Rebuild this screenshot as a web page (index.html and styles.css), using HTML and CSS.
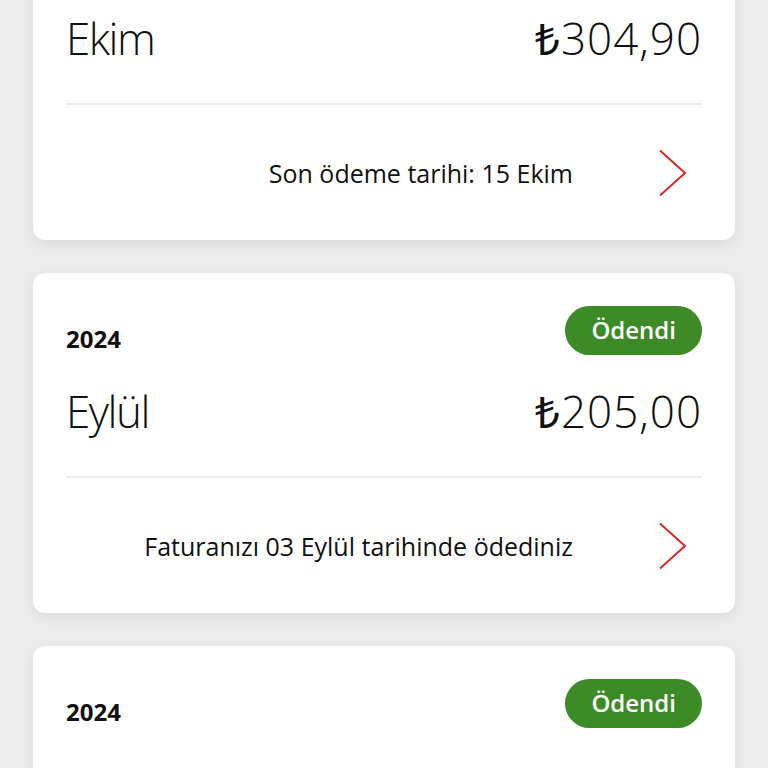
FILE: index.html
```html
<!DOCTYPE html>
<html lang="tr">
<head>
  <meta charset="UTF-8">
  <meta name="viewport" content="width=device-width, initial-scale=1">
  <title>Faturalarım</title>
  <link rel="stylesheet" href="styles.css">
</head>
<body>
  <div class="bill-list">
    <div class="bill-card">
      <div class="bill-head">
        <span class="bill-year">2024</span>
      </div>
      <div class="bill-main">
        <span class="bill-month">Ekim</span>
        <span class="bill-amount"><span class="lira">₺</span>304,90</span>
      </div>
      <div class="bill-foot">
        <span class="bill-note">Son ödeme tarihi: 15 Ekim</span>
        <svg class="chevron" viewBox="0 0 32 48" width="32" height="48"><path d="M4 1.5 L29 24 L4 46.5" fill="none" stroke="#d82a25" stroke-width="2"/></svg>
      </div>
    </div>

    <div class="bill-card">
      <div class="bill-head">
        <span class="bill-year">2024</span>
        <span class="badge">Ödendi</span>
      </div>
      <div class="bill-main">
        <span class="bill-month">Eylül</span>
        <span class="bill-amount"><span class="lira">₺</span>205,00</span>
      </div>
      <div class="bill-foot">
        <span class="bill-note">Faturanızı 03 Eylül tarihinde ödediniz</span>
        <svg class="chevron" viewBox="0 0 32 48" width="32" height="48"><path d="M4 1.5 L29 24 L4 46.5" fill="none" stroke="#d82a25" stroke-width="2"/></svg>
      </div>
    </div>

    <div class="bill-card">
      <div class="bill-head">
        <span class="bill-year">2024</span>
        <span class="badge">Ödendi</span>
      </div>
      <div class="bill-main">
        <span class="bill-month">Ağustos</span>
        <span class="bill-amount"><span class="lira">₺</span>304,90</span>
      </div>
      <div class="bill-foot">
        <span class="bill-note">Faturanızı 05 Ağustos tarihinde ödediniz</span>
        <svg class="chevron" viewBox="0 0 32 48" width="32" height="48"><path d="M4 1.5 L29 24 L4 46.5" fill="none" stroke="#d82a25" stroke-width="2"/></svg>
      </div>
    </div>
  </div>
</body>
</html>
```

FILE: styles.css
```css
* {
  box-sizing: border-box;
  margin: 0;
  padding: 0;
}

body {
  font-family: 'Open Sans', 'Noto Sans', sans-serif;
  background: #ececec;
  color: #111;
  overflow: hidden;
  height: 100vh;
}

.bill-list {
  display: flex;
  flex-direction: column;
  gap: 33px;
  padding: 0 33px;
  margin-top: -100px;
}

.bill-card {
  background: #fff;
  border-radius: 12px;
  height: 340px;
  flex-shrink: 0;
  padding: 33px 33px 0;
  box-shadow: 0 4px 14px rgba(0, 0, 0, 0.08);
  display: flex;
  flex-direction: column;
}

.bill-head {
  display: flex;
  justify-content: space-between;
  align-items: flex-end;
  height: 49px;
}

.bill-year {
  font-size: 24px;
  font-weight: 700;
  line-height: 1;
  margin-bottom: 4px;
}

.badge {
  background: #3d8b26;
  color: #fff;
  font-size: 24px;
  font-weight: 600;
  height: 49px;
  line-height: 48px;
  padding: 0 26px;
  border-radius: 25px;
}

.bill-main {
  display: flex;
  justify-content: space-between;
  align-items: center;
  height: 123px;
  padding-bottom: 10px;
  border-bottom: 2px solid #ebebeb;
  font-weight: 300;
  font-size: 44px;
}

.bill-month {
  letter-spacing: -1.5px;
}

.bill-amount {
  letter-spacing: 1px;
}

.lira {
  font-weight: 400;
}

.bill-foot {
  flex: 1;
  display: flex;
  align-items: center;
  justify-content: flex-end;
}

.bill-note {
  font-size: 25px;
}

.chevron {
  margin: 0 14px 0 83px;
}
```
